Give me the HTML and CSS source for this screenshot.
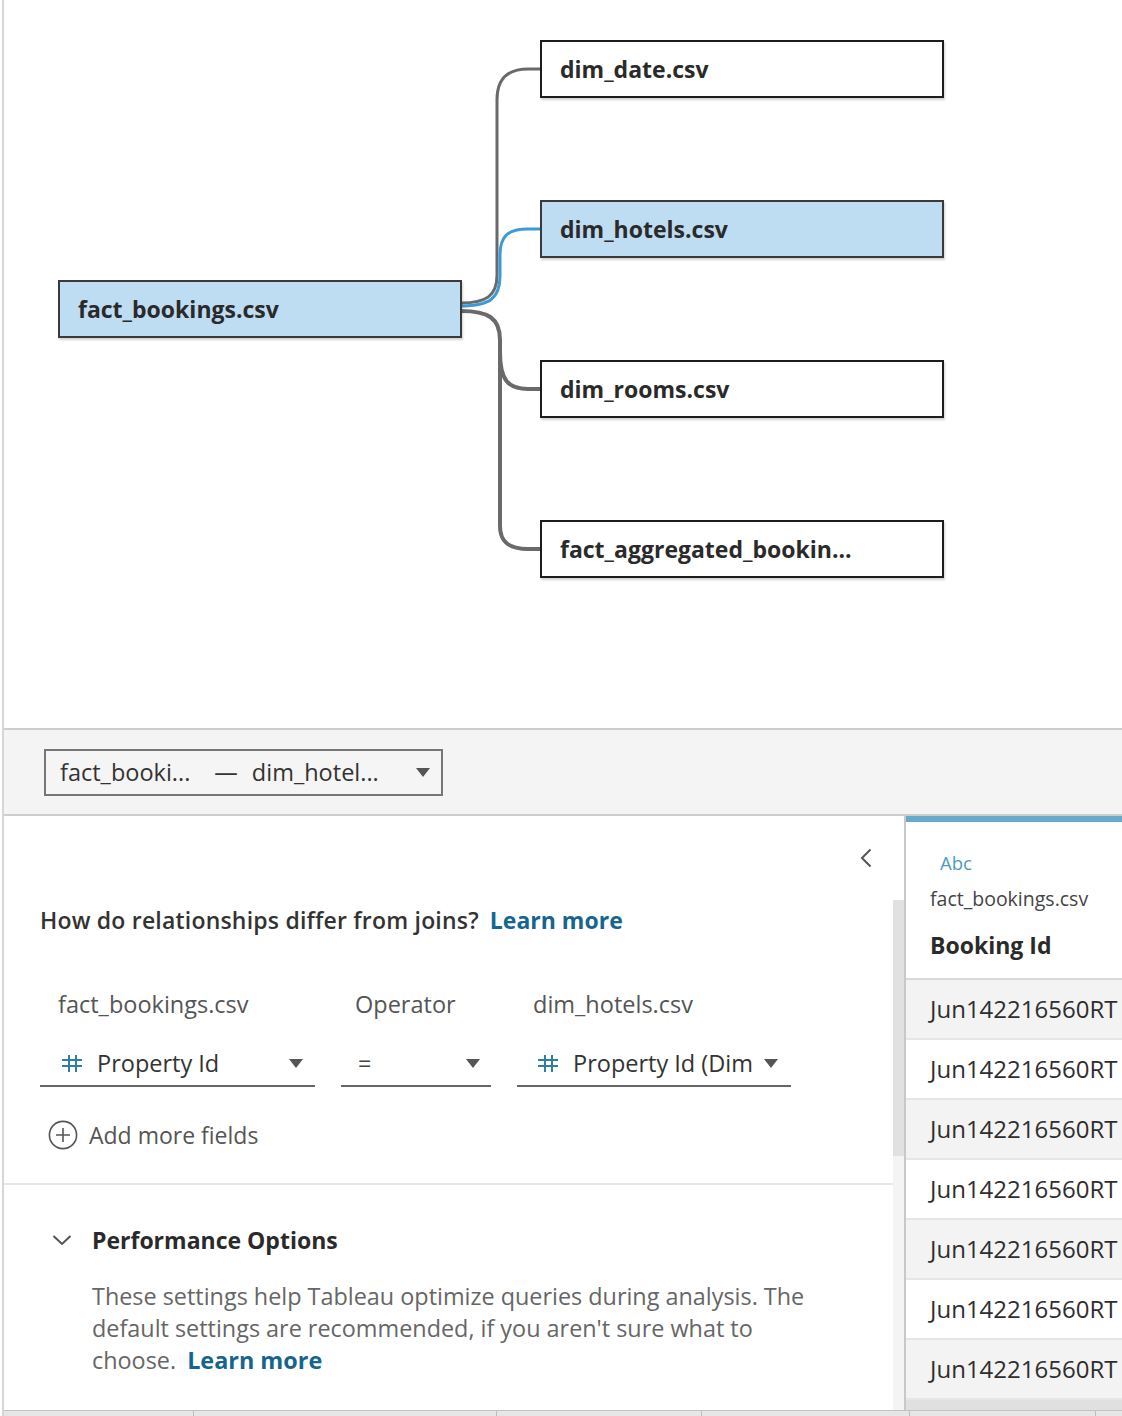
FILE: index.html
```html
<!DOCTYPE html>
<html lang="en">
<head>
<meta charset="utf-8">
<title>Relationships</title>
<link rel="stylesheet" href="styles.css">
</head>
<body>
<div class="app">
  <section class="canvas">
    <svg class="links" width="1118" height="728" viewBox="4 0 1118 728" aria-hidden="true">
      <path class="link" d="M461,303 C486,303 497,296 497,275 L497,100 C497,80 506,69 528,69 L540,69"/>
      <path class="link link-thick" d="M461,311 C488,311 500,318 500,340 L500,526 C500,543 510,549 528,549 L540,549"/>
      <path class="link link-thick" d="M500,352 C500,380 508,389 528,389 L540,389"/>
      <path class="link link-active" d="M461,306 C490,306 500,298 500,276 L500,255 C500,236 508,229 528,229 L540,229"/>
    </svg>
    <div class="node is-selected node-fact">fact_bookings.csv</div>
    <div class="node node-date">dim_date.csv</div>
    <div class="node is-selected node-hotels">dim_hotels.csv</div>
    <div class="node node-rooms">dim_rooms.csv</div>
    <div class="node node-agg">fact_aggregated_bookin...</div>
  </section>

  <section class="toolbar">
    <div class="rel-select">
      <span class="rel-name">fact_booki...</span>
      <span class="rel-dash">—</span>
      <span class="rel-name">dim_hotel...</span>
      <span class="caret caret-select"></span>
    </div>
  </section>

  <section class="lower">
    <div class="editor">
      <div class="rel-section">
        <div class="collapse-row">
          <svg class="chev-left" width="12" height="20" viewBox="0 0 12 20"><polyline points="10.5,1.5 2,10 10.5,18.5"/></svg>
        </div>
        <p class="question">How do relationships differ from joins?<a class="link-more">Learn more</a></p>
        <div class="field-grid">
          <div class="col-label col-a">fact_bookings.csv</div>
          <div class="col-label col-b">Operator</div>
          <div class="col-label col-c">dim_hotels.csv</div>
          <div class="field field-a">
            <svg class="hash" width="20" height="17" viewBox="0 0 20 17"><path d="M7 0V17M14 0V17M0 5H20M0 11H20"/></svg>
            <span class="field-text">Property Id</span>
            <span class="caret"></span>
          </div>
          <div class="field field-b">
            <span class="field-text op">=</span>
            <span class="caret"></span>
          </div>
          <div class="field field-c">
            <svg class="hash" width="20" height="17" viewBox="0 0 20 17"><path d="M7 0V17M14 0V17M0 5H20M0 11H20"/></svg>
            <span class="field-text">Property Id (Dim</span>
            <span class="caret"></span>
          </div>
        </div>
        <div class="add-more">
          <svg class="plus-circle" width="30" height="30" viewBox="0 0 30 30"><circle cx="15" cy="15" r="13.6"/><path d="M15 8V22M8 15H22"/></svg>
          <span>Add more fields</span>
        </div>
      </div>
      <div class="perf-section">
        <div class="perf-title">
          <svg class="chev-down" width="20" height="12" viewBox="0 0 20 12"><polyline points="1.5,2 10,10 18.5,2"/></svg>
          <span>Performance Options</span>
        </div>
        <p class="perf-text">These settings help Tableau optimize queries during analysis. The default settings are recommended, if you aren't sure what to <span class="nowrap">choose.<a class="link-more">Learn more</a></span></p>
      </div>
    </div>

    <div class="scroll">
      <div class="scroll-track"><div class="scroll-thumb"></div></div>
    </div>

    <div class="data">
      <div class="data-bar"></div>
      <div class="data-head">
        <div class="type-abc">Abc</div>
        <div class="data-source">fact_bookings.csv</div>
        <div class="data-field">Booking Id</div>
      </div>
      <div class="data-row odd">Jun142216560RT</div>
      <div class="data-row">Jun142216560RT</div>
      <div class="data-row odd">Jun142216560RT</div>
      <div class="data-row">Jun142216560RT</div>
      <div class="data-row odd">Jun142216560RT</div>
      <div class="data-row">Jun142216560RT</div>
      <div class="data-row odd">Jun142216560RT</div>
    </div>
  </section>

  <footer class="statusbar">
    <span class="seg seg-1"></span>
    <span class="seg seg-2"></span>
    <span class="seg seg-3"></span>
    <span class="seg seg-4"></span>
    <span class="seg seg-5"></span>
    <span class="seg seg-6"></span>
  </footer>
</div>
</body>
</html>
```

FILE: styles.css
```css
* { box-sizing: border-box; }

html, body {
  margin: 0;
  padding: 0;
}

body {
  width: 1122px;
  height: 1416px;
  overflow: hidden;
  background: #ffffff;
  font-family: "Open Sans", "Noto Sans", "Liberation Sans", sans-serif;
  color: #333333;
}

.app {
  margin-left: 2px;
  border-left: 2px solid #d6d6d6;
  height: 1416px;
  display: flex;
  flex-direction: column;
}

/* ---------- diagram canvas ---------- */
.canvas {
  position: relative;
  flex: none;
  height: 730px;
  border-bottom: 2px solid #cdcdcd;
}

.links {
  position: absolute;
  left: 0;
  top: 0;
}

.link {
  fill: none;
  stroke: #6a6a6a;
  stroke-width: 3;
}

.link-thick { stroke-width: 4; }

.link-active {
  stroke: #3d9ad9;
  stroke-width: 3;
}

.node {
  position: absolute;
  width: 404px;
  height: 58px;
  padding-left: 18px;
  border: 2px solid #1c1c1c;
  background: #ffffff;
  color: #2a2a2a;
  font-size: 23px;
  font-weight: 700;
  line-height: 54px;
  white-space: nowrap;
  box-shadow: 1px 2px 2px rgba(0, 0, 0, 0.18);
}

.node.is-selected {
  background: #bedcf2;
  border-color: #3a3a3a;
}

.node-fact   { left: 54px;  top: 280px; }
.node-date   { left: 536px; top: 40px; }
.node-hotels { left: 536px; top: 200px; }
.node-rooms  { left: 536px; top: 360px; }
.node-agg    { left: 536px; top: 520px; }

/* ---------- toolbar ---------- */
.toolbar {
  flex: none;
  height: 86px;
  background: #f4f4f4;
  border-bottom: 2px solid #cdcdcd;
  display: flex;
  align-items: center;
  padding-left: 40px;
}

.rel-select {
  width: 399px;
  height: 47px;
  border: 2px solid #767676;
  background: #f5f5f5;
  display: flex;
  align-items: center;
  padding-left: 14px;
  padding-right: 11px;
  font-size: 23.5px;
  color: #333333;
}

.rel-dash {
  margin: 0 14px 0 24px;
}

.caret {
  display: inline-block;
  width: 0;
  height: 0;
  border-left: 7px solid transparent;
  border-right: 7px solid transparent;
  border-top: 9px solid #555555;
}

.caret-select {
  margin-left: auto;
}

/* ---------- lower area ---------- */
.lower {
  flex: none;
  height: 594px;
  display: flex;
}

.editor {
  flex: none;
  width: 889px;
  display: flex;
  flex-direction: column;
  overflow: hidden;
}

.rel-section {
  padding-left: 36px;
  padding-bottom: 28px;
  border-bottom: 2px solid #e7e7e7;
}

.collapse-row {
  height: 84px;
  display: flex;
  align-items: center;
  justify-content: flex-end;
  padding-right: 21px;
}

.chev-left polyline,
.chev-down polyline {
  fill: none;
  stroke: #555555;
  stroke-width: 2;
}

.question {
  margin: 0;
  height: 40px;
  line-height: 40px;
  font-size: 23px;
  font-weight: 600;
  letter-spacing: 0.2px;
  color: #333333;
  white-space: nowrap;
}

.link-more {
  margin-left: 11px;
  color: #16658f;
  font-weight: 700;
  letter-spacing: 0;
  text-decoration: none;
}

.field-grid {
  margin-top: 44px;
  display: grid;
  grid-template-columns: 275px 150px 274px;
  column-gap: 26px;
  row-gap: 17px;
}

.col-label {
  height: 40px;
  line-height: 40px;
  font-size: 23.5px;
  color: #555555;
  white-space: nowrap;
}

.col-a { padding-left: 18px; }
.col-b { padding-left: 14px; }
.col-c { padding-left: 16px; }

.field {
  height: 46px;
  border-bottom: 2px solid #666666;
  display: flex;
  align-items: center;
  white-space: nowrap;
  overflow: hidden;
}

.field-a { padding: 0 12px 0 22px; }
.field-b { padding: 0 11px 0 17px; }
.field-c { padding: 0 13px 0 21px; }

.field .caret { margin-left: auto; flex: none; }

.hash {
  flex: none;
  margin-right: 15px;
}

.hash path {
  fill: none;
  stroke: #2f7da2;
  stroke-width: 2;
}

.field-text {
  font-size: 23.5px;
  color: #333333;
}

.field-text.op { color: #444444; }

.add-more {
  margin-top: 28px;
  height: 40px;
  display: flex;
  align-items: center;
  padding-left: 8px;
  font-size: 23px;
  color: #555555;
}

.plus-circle {
  margin-right: 11px;
}

.plus-circle circle,
.plus-circle path {
  fill: none;
  stroke: #555555;
  stroke-width: 1.6;
}

.perf-section {
  padding-left: 48px;
}

.perf-title {
  margin-top: 37px;
  height: 36px;
  display: flex;
  align-items: center;
  font-size: 23px;
  font-weight: 700;
  color: #2a2a2a;
}

.chev-down {
  margin-right: 20px;
}

.perf-text {
  margin: 22px 0 0 40px;
  width: 732px;
  font-size: 23.4px;
  line-height: 32px;
  color: #666666;
}

.nowrap { white-space: nowrap; }

.perf-text .link-more {
  display: inline-block;
  margin-left: 11px;
}

/* ---------- scrollbar ---------- */
.scroll {
  flex: none;
  width: 11px;
  padding-top: 84px;
  display: flex;
  flex-direction: column;
}

.scroll-track {
  flex: 1;
  background: #f4f4f4;
}

.scroll-thumb {
  height: 256px;
  background: #e1e1e1;
}

/* ---------- data preview ---------- */
.data {
  flex: 1;
  min-width: 0;
  border-left: 2px solid #c8c8c8;
  background: #e0e0e0;
  overflow: hidden;
}

.data-bar {
  height: 6px;
  background: #65a9cb;
}

.data-head {
  background: #ffffff;
  padding: 29px 0 17px 24px;
  border-bottom: 2px solid #d9d9d9;
  white-space: nowrap;
}

.type-abc {
  margin-left: 10px;
  height: 24px;
  line-height: 24px;
  font-size: 18.5px;
  font-weight: 500;
  color: #4b9cc0;
}

.data-source {
  margin-top: 10px;
  height: 28px;
  line-height: 28px;
  font-size: 19.5px;
  color: #444444;
}

.data-field {
  margin-top: 16px;
  height: 32px;
  line-height: 32px;
  font-size: 23px;
  font-weight: 700;
  color: #2a2a2a;
}

.data-row {
  height: 60px;
  line-height: 58px;
  padding-left: 24px;
  border-bottom: 2px solid #e6e6e6;
  background: #ffffff;
  font-size: 24px;
  color: #2e2e2e;
  white-space: nowrap;
}

.data-row.odd { background: #f3f3f3; }

/* ---------- status bar ---------- */
.statusbar {
  flex: none;
  height: 6px;
  border-top: 1px solid #c2c2c2;
  background: #e6e6e6;
  display: flex;
}

.seg {
  flex: none;
  height: 100%;
  border-right: 1px solid #bdbdbd;
}

.seg-1 { width: 190px; }
.seg-2 { width: 303px; }
.seg-3 { width: 205px; }
.seg-4 { width: 208px; }
.seg-5 { width: 186px; }
.seg-6 { flex: 1; border-right: none; }
```
